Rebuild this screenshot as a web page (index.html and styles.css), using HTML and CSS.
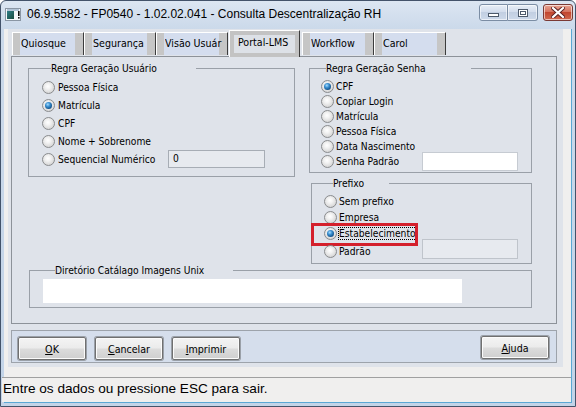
FILE: index.html
```html
<!DOCTYPE html>
<html lang="pt">
<head>
<meta charset="utf-8">
<title>Consulta Descentralização RH</title>
<link rel="stylesheet" href="styles.css">
</head>
<body>
<div class="window">
  <div class="titlebar">
    <svg class="app-icon" width="17" height="13" viewBox="0 0 17 13">
      <defs>
        <linearGradient id="tg" x1="0" y1="0" x2="1" y2="1">
          <stop offset="0" stop-color="#2f7f8a"/>
          <stop offset="1" stop-color="#184a3c"/>
        </linearGradient>
      </defs>
      <rect x="0.5" y="0.5" width="15" height="12" fill="#f4f6f8" stroke="#8a96a4"/>
      <rect x="2" y="3" width="7" height="8" fill="url(#tg)"/>
      <rect x="2" y="1.5" width="12" height="1" fill="#6f8fb4"/>
      <rect x="13" y="3" width="1.6" height="5" fill="#111"/>
      <rect x="13" y="9" width="1.6" height="1.6" fill="#111"/>
    </svg>
    <span class="title">06.9.5582 - FP0540 - 1.02.02.041 - Consulta Descentralização RH</span>
    <div class="caption">
      <div class="cbtn cbtn-min"><span class="ico-min"></span></div>
      <div class="cbtn cbtn-max"><span class="ico-max"></span></div>
      <div class="cbtn cbtn-close">
        <svg width="14" height="11" viewBox="0 0 14 11">
          <path d="M2 1 L7 5.5 L12 1 M2 10 L7 5.5 L12 10" stroke="#5a2020" stroke-width="4" fill="none" stroke-linecap="square"/>
          <path d="M2 1 L7 5.5 L12 1 M2 10 L7 5.5 L12 10" stroke="#ffffff" stroke-width="2.2" fill="none" stroke-linecap="square"/>
        </svg>
      </div>
    </div>
  </div>

  <div class="client">
    <div class="form">
      <div class="tabs">
        <div class="tab"><span>Quiosque</span></div>
        <div class="tab"><span>Segurança</span></div>
        <div class="tab"><span>Visão Usuár</span></div>
        <div class="tab tab-active"><span>Portal-LMS</span></div>
        <div class="tab"><span>Workflow</span></div>
        <div class="tab"><span>Carol</span></div>
      </div>

      <div class="panel">
        <div class="top-row">
          <fieldset class="group g-usuario">
            <legend class="lg-usuario">Regra Geração Usuário</legend>
            <div class="opt"><span class="radio"></span><span class="lbl">Pessoa Física</span></div>
            <div class="opt"><span class="radio on"></span><span class="lbl">Matrícula</span></div>
            <div class="opt"><span class="radio"></span><span class="lbl">CPF</span></div>
            <div class="opt"><span class="radio"></span><span class="lbl">Nome + Sobrenome</span></div>
            <div class="opt"><span class="radio"></span><span class="lbl lbl-wide">Sequencial Numérico</span><span class="field field-disabled field-seq">0</span></div>
          </fieldset>

          <div class="right-col">
            <fieldset class="group g-senha">
              <legend class="lg-senha">Regra Geração Senha</legend>
              <div class="opt"><span class="radio on"></span><span class="lbl">CPF</span></div>
              <div class="opt"><span class="radio"></span><span class="lbl">Copiar Login</span></div>
              <div class="opt"><span class="radio"></span><span class="lbl">Matrícula</span></div>
              <div class="opt"><span class="radio"></span><span class="lbl">Pessoa Física</span></div>
              <div class="opt"><span class="radio"></span><span class="lbl">Data Nascimento</span></div>
              <div class="opt"><span class="radio"></span><span class="lbl lbl-senha">Senha Padrão</span><span class="field field-senha"></span></div>
            </fieldset>

            <fieldset class="group g-prefixo">
              <legend class="lg-prefixo">Prefixo</legend>
              <div class="opt"><span class="radio"></span><span class="lbl">Sem prefixo</span></div>
              <div class="opt"><span class="radio"></span><span class="lbl">Empresa</span></div>
              <div class="opt opt-focus"><span class="radio on"></span><span class="lbl"><span class="focus">Estabelecimento</span></span><span class="highlight"></span></div>
              <div class="opt opt-padrao"><span class="radio"></span><span class="lbl lbl-prefixo">Padrão</span><span class="field field-disabled field-padrao"></span></div>
            </fieldset>
          </div>
        </div>

        <fieldset class="group g-dir">
          <legend class="lg-dir">Diretório Catálago Imagens Unix</legend>
          <div class="field field-dir"></div>
        </fieldset>
      </div>

      <div class="buttonbar">
        <button class="btn"><u>O</u>K</button>
        <button class="btn"><u>C</u>ancelar</button>
        <button class="btn"><u>I</u>mprimir</button>
        <button class="btn btn-right"><u>A</u>juda</button>
      </div>
    </div>
    <div class="status">Entre os dados ou pressione ESC para sair.</div>
  </div>
</div>
</body>
</html>
```

FILE: styles.css
```css
* { box-sizing: border-box; }
html, body { margin: 0; padding: 0; }
body {
  width: 576px;
  height: 407px;
  overflow: hidden;
  background: #ffffff;
  font-family: "DejaVu Sans Condensed", "DejaVu Sans", sans-serif;
  font-size: 10.2px;
  color: #000;
}

.window {
  width: 576px;
  height: 407px;
  border: 1px solid #43536a;
  border-radius: 6px 6px 0 0;
  background: linear-gradient(#dce6f2, #cbd9ea 28px, #c3d4e8);
  display: flex;
  flex-direction: column;
  padding: 0 3px 3px 3px;
}

/* title bar */
.titlebar {
  height: 28px;
  display: flex;
  align-items: center;
  padding-left: 1px;
  flex: none;
}
.app-icon { flex: none; margin-top: -2px; }
.title {
  margin-left: 5px;
  font-family: "Liberation Sans", sans-serif;
  font-size: 12px;
  color: #000;
  white-space: nowrap;
  margin-top: -2px;
}
.caption {
  margin-left: auto;
  display: flex;
  align-self: flex-start;
  margin-top: 3px;
  margin-right: -1px;
}
.cbtn {
  height: 17px;
  border: 1px solid #7b8da4;
  border-radius: 3px;
  display: flex;
  align-items: center;
  justify-content: center;
  box-shadow: inset 0 0 0 1px rgba(255,255,255,0.6);
}
.cbtn-min, .cbtn-max {
  width: 29px;
  background: linear-gradient(#e8eef6, #d3dded 45%, #c2cfe2 50%, #cdd9ea);
}
.cbtn-min { border-radius: 3px 0 0 3px; }
.cbtn-max { border-radius: 0 3px 3px 0; border-left: none; width: 30px; margin-right: 5px; }
.cbtn-close {
  width: 30px;
  border-color: #7a3a35;
  background: linear-gradient(#e8a493, #d5735f 45%, #c2462f 50%, #d06a50);
}
.ico-min {
  width: 11px; height: 4px;
  border: 1px solid #4d5a6b;
  background: #fff;
  margin-top: 5px;
}
.ico-max {
  width: 10px; height: 8px;
  border: 1px solid #4d5a6b;
  background: #fff;
  box-shadow: inset 0 0 0 1px #fff, inset 0 0 0 2px #4d5a6b;
}

/* client */
.client {
  flex: 1;
  background: #f0efee;
  display: flex;
  flex-direction: column;
  border-right: 1px solid #5aa7d4;
  border-bottom: 1px solid #5aa7d4;
}
.form {
  margin: 0 8px 0 4px;
  background: #dfe3ea;
  padding: 2px 0 4px 0;
}

/* tabs */
.tabs {
  display: flex;
  align-items: flex-end;
  height: 26px;
  padding-left: 4px;
  position: relative;
  z-index: 1;
}
.tab {
  width: 72px;
  height: 23px;
  margin-bottom: 2px;
  border-top: 1px solid #fff;
  border-left: 1px solid #fff;
  border-right: 1px solid #3c3c3c;
  background: linear-gradient(90deg, #c6c6c6 0, #c6c6c6 7px, #d4ddee 7px, #d4ddee calc(100% - 8px), #c6c6c6 calc(100% - 8px));
  overflow: hidden;
  white-space: nowrap;
  line-height: 21px;
  padding-left: 8px;
  font-size: 10.6px;
}
.tab span { display: block; overflow: hidden; width: 62px; }
.tab-active {
  width: 71px;
  height: 27px;
  margin: 0 2px 0 1px;
  border: 1px solid #fff;
  border-right: 1px solid #3c3c3c;
  border-bottom: none;
  background: #dde1e7;
  box-shadow: inset 0 0 0 4px #c3c3c3;
  line-height: 23px;
  padding-left: 8px;
}

/* panel */
.panel {
  margin-left: 3px;
  width: 546px;
  height: 268px;
  border: 1px solid #8d9299;
  margin-top: -1px;
  padding: 5px 0 0 16px;
}
.top-row { display: flex; align-items: flex-start; }
.right-col { display: flex; flex-direction: column; margin-left: 14px; }

.group {
  margin: 0;
  border: 1px solid #9aa0a8;
  padding: 0;
  min-width: 0;
}
.group legend {
  padding: 0;
  line-height: 13px;
  white-space: nowrap;
}
.g-usuario { width: 267px; padding: 3px 0 8px 13px; }
.lg-usuario { margin-left: 9px; width: 145px; }
.g-senha { width: 223px; padding: 4px 0 3px 11px; }
.lg-senha { margin-left: 5px; width: 145px; }
.g-prefixo { width: 221px; margin: 4px 0 0 2px; padding: 3px 0 2px 12px; }
.lg-prefixo { margin-left: 9px; width: 56px; }
.g-dir { width: 503px; margin-left: 1px; padding: 2px 0 4px 13px; }
.lg-dir { margin-left: 12px; width: 178px; }

.opt {
  display: flex;
  align-items: center;
  height: 18px;
  white-space: nowrap;
  position: relative;
}
.g-senha .opt { height: 15px; }
.g-prefixo .opt { height: 16px; }
.g-prefixo .opt-padrao { height: 20px; }

.radio {
  flex: none;
  width: 13px;
  height: 13px;
  border-radius: 50%;
  border: 1px solid #8a8c8e;
  background: radial-gradient(circle at 45% 40%, #ffffff 0, #f2f2f2 30%, #d6d6d6 75%, #c4c4c4 100%);
  position: relative;
  margin-right: 3px;
}
.g-senha .radio, .g-prefixo .radio { margin-right: 2px; }
.radio.on::after {
  content: "";
  position: absolute;
  left: 2px; top: 2px;
  width: 7px; height: 7px;
  border-radius: 50%;
  background: radial-gradient(circle at 40% 35%, #a6dcff 0, #3a8fd0 35%, #114f86 75%, #0c3a66 100%);
}

.lbl-wide { width: 110px; }
.lbl-senha { width: 86px; }
.lbl-prefixo { width: 83px; }

.field {
  display: block;
  flex: none;
  background: #fff;
  border: 1px solid #c6cbd2;
}
.field-disabled { background: #e7eaef; border-color: #a7adb5; }
.field-seq { width: 97px; height: 18px; line-height: 16px; padding-left: 4px; }
.field-senha { width: 96px; height: 19px; margin: -2px 0 -2px 0; }
.field-padrao { width: 96px; height: 20px; margin-top: -4px; border-color: #bfc4cb; }
.field-dir { width: 419px; height: 24px; border: none; }

.focus { outline: 1px dotted #000; outline-offset: 0; }
.highlight {
  position: absolute;
  left: -13px;
  top: -2px;
  width: 107px;
  height: 23px;
  border: 3px solid #d4202c;
  pointer-events: none;
}

/* button bar */
.buttonbar {
  margin: 6px 0 0 3px;
  width: 546px;
  height: 33px;
  border: 1px solid #9da3ab;
  background: #d5deec;
  display: flex;
  align-items: flex-start;
  padding: 5px 7px 0 6px;
  gap: 9px;
}
.btn {
  width: 68px;
  height: 23px;
  font-family: "DejaVu Sans Condensed", "DejaVu Sans", sans-serif;
  font-size: 10.6px;
  color: #000;
  border: 1px solid #707070;
  border-radius: 2px;
  background: linear-gradient(#f4f4f4, #ebebeb 48%, #dcdcdc 52%, #cfcfcf);
  box-shadow: 0 0 0 1px #9aa0a8, inset 0 0 0 1px #fbfbfb;
  padding: 0;
  margin-top: 1px;
}
.btn-right { margin-left: auto; margin-top: 0; }

/* status */
.status {
  margin-top: 10px;
  margin-left: -2px;
  border-top: 1px solid #a0a0a0;
  flex: 1;
  font-family: "Liberation Sans", sans-serif;
  font-size: 13.6px;
  line-height: 22px;
  padding-left: 1px;
  background: #f0efee;
}
```
